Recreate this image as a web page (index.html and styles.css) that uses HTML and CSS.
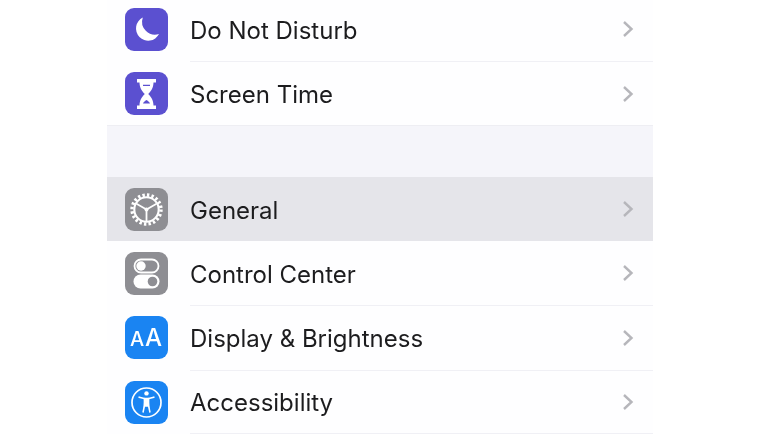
FILE: index.html
```html
<!DOCTYPE html>
<html lang="en">
<head>
<meta charset="utf-8">
<title>Settings</title>
<link rel="stylesheet" href="styles.css">
</head>
<body>
<main class="panel">
  <section class="group">
    <div class="row">
      <svg class="icon" viewBox="0 0 43 43"><rect width="43" height="43" rx="9" fill="#5b50d0"/><path d="M17.800 9.500a12.200 12.200 0 1 0 16.200 16.600a13 13 0 0 1-16.200-16.600z" fill="#fff"/></svg>
      <div class="body"><span class="label">Do Not Disturb</span><svg class="chev" viewBox="0 0 12 18"><path d="M2 2l7.500 7l-7.500 7"/></svg></div>
    </div>
    <div class="row">
      <svg class="icon" viewBox="0 0 43 43"><rect width="43" height="43" rx="9" fill="#5b50d0"/><path d="M12 7h19v3.500h-2.500c0 5-2.500 9-5.300 11.500c2.800 2.500 5.300 6.500 5.300 11.500h2.500v3.500h-19v-3.500h2.500c0-5 2.500-9 5.300-11.500c-2.800-2.500-5.300-6.500-5.300-11.500h-2.500z" fill="#fff"/><path d="M18 12.800h7v1.300h-7zM18 31.500c.4-1.200 1.800-2.400 3.500-3.400c1.700 1 3.100 2.200 3.500 3.400z" fill="#5b50d0"/></svg>
      <div class="body last"><span class="label">Screen Time</span><svg class="chev" viewBox="0 0 12 18"><path d="M2 2l7.500 7l-7.500 7"/></svg></div>
    </div>
  </section>
  <div class="spacer"></div>
  <section class="group">
    <div class="row active">
      <svg class="icon" viewBox="0 0 43 43"><rect width="43" height="43" rx="9" fill="#8e8e93"/><circle cx="21.500" cy="21.500" r="14.500" fill="none" stroke="#fff" stroke-width="3.400" stroke-dasharray="2.400 2.156"/><circle cx="21.500" cy="21.500" r="12.200" fill="none" stroke="#fff" stroke-width="2.100"/><path d="M21.500 21.500V33M21.500 21.500l-10-5.800M21.500 21.500l10-5.800" fill="none" stroke="#fff" stroke-width="1.800"/><circle cx="21.500" cy="21.500" r="2" fill="#fff"/></svg>
      <div class="body"><span class="label">General</span><svg class="chev" viewBox="0 0 12 18"><path d="M2 2l7.500 7l-7.500 7"/></svg></div>
    </div>
    <div class="row">
      <svg class="icon" viewBox="0 0 43 43"><rect width="43" height="43" rx="9" fill="#8e8e93"/><rect x="9.500" y="7.500" width="24" height="13" rx="6.500" fill="none" stroke="#fff" stroke-width="1.800"/><circle cx="16" cy="14" r="4.700" fill="#fff"/><rect x="8.500" y="22.500" width="26" height="14" rx="7" fill="#fff"/><circle cx="27.500" cy="29.500" r="4.800" fill="#8e8e93"/></svg>
      <div class="body"><span class="label">Control Center</span><svg class="chev" viewBox="0 0 12 18"><path d="M2 2l7.500 7l-7.500 7"/></svg></div>
    </div>
    <div class="row tall">
      <svg class="icon" viewBox="0 0 43 43"><rect width="43" height="43" rx="9" fill="#1a84f2"/><text x="21" y="30" class="aa"><tspan class="aa-small">A</tspan><tspan dx="1">A</tspan></text></svg>
      <div class="body"><span class="label">Display &amp; Brightness</span><svg class="chev" viewBox="0 0 12 18"><path d="M2 2l7.500 7l-7.500 7"/></svg></div>
    </div>
    <div class="row">
      <svg class="icon" viewBox="0 0 43 43"><rect width="43" height="43" rx="9" fill="#1a84f2"/><circle cx="21.500" cy="21.500" r="14.500" fill="none" stroke="#fff" stroke-width="1.700"/><circle cx="21.500" cy="12.400" r="2.200" fill="#fff"/><path d="M14.200 16.200l5 1.300h4.600l5-1.300" fill="none" stroke="#fff" stroke-width="1.700" stroke-linecap="round" stroke-linejoin="round"/><path d="M19.400 17.500v7.500l-1.300 6M23.600 17.500v7.500l1.300 6M19.400 18v7h4.200v-7z" fill="#fff" stroke="#fff" stroke-width="1.500" stroke-linecap="round" stroke-linejoin="round"/><path d="M21.500 26.500l-1.300 5h2.600z" fill="#1a84f2"/></svg>
      <div class="body end"><span class="label">Accessibility</span><svg class="chev" viewBox="0 0 12 18"><path d="M2 2l7.500 7l-7.500 7"/></svg></div>
    </div>
  </section>
</main>
</body>
</html>
```
FILE: styles.css
```css
html, body {
  margin: 0;
  height: 439px;
  overflow: hidden;
  background: #fff;
}
.panel {
  width: 546px;
  margin: -3px 0 0 107px;
  font-family: Inter, "Liberation Sans", sans-serif;
  filter: blur(0.5px);
}
.group {
  background: #fefeff;
}
.row {
  display: flex;
  align-items: center;
  height: 64px;
  padding-left: 18px;
}
.row.tall {
  height: 65px;
}
.row.active {
  background: #e5e5ea;
}
.icon {
  flex: none;
  width: 43px;
  height: 43px;
  margin-right: 22px;
}
.body {
  flex: 1;
  align-self: stretch;
  display: flex;
  align-items: center;
  justify-content: space-between;
  padding-right: 19px;
  margin-bottom: -1px;
  border-bottom: 1px solid #f0f0f5;
}
.body.last {
  border-bottom: 0;
}
.body.end {
  margin-bottom: 0;
}
.active .body {
  border-bottom-color: transparent;
}
.label {
  padding-top: 3px;
  font-size: 24px;
  line-height: 30px;
  color: #1c1c1e;
}
.chev {
  width: 12px;
  height: 18px;
  fill: none;
  stroke: #b6b6bb;
  stroke-width: 2.400;
}
.spacer {
  height: 52px;
  background: #f5f5fa;
  border-top: 1px solid #eeeef3;
  box-sizing: border-box;
}
.aa {
  font-family: Inter, "Liberation Sans", sans-serif;
  font-size: 24px;
  font-weight: 500;
  fill: #fff;
  text-anchor: middle;
}
.aa-small {
  font-size: 20px;
}
```
